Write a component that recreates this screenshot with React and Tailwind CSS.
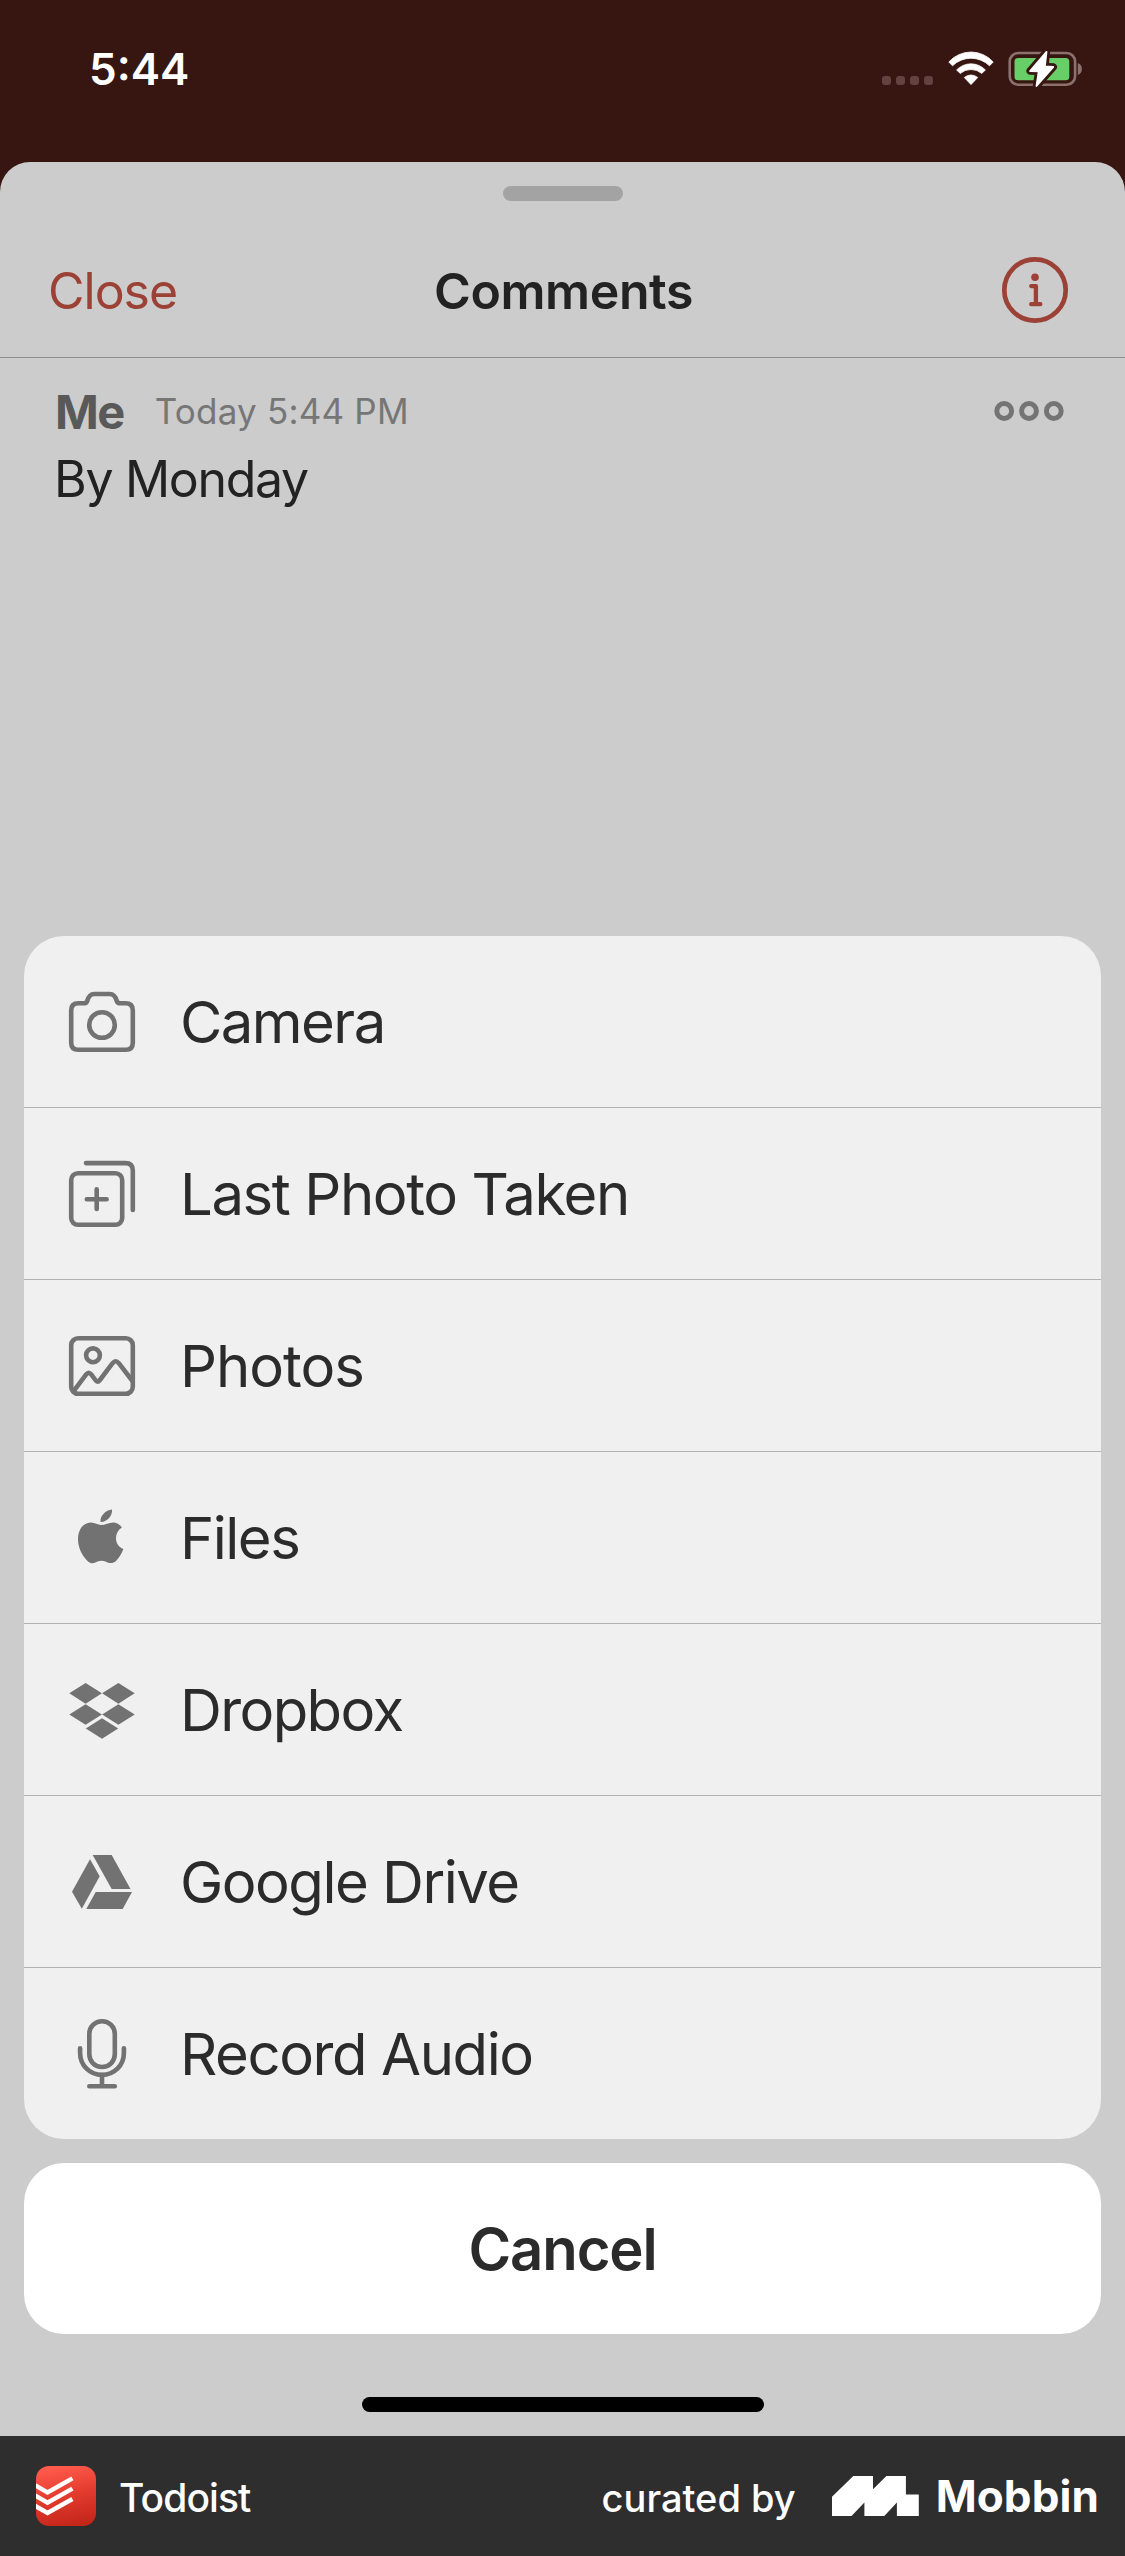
function SignalDots() {
    return (
        <div className="flex gap-[5px] pt-[26px]">
            {[0, 1, 2, 3].map((i) => (
                <span key={i} className="h-[9px] w-[9px] rounded-[3px] bg-[#63433f]" />
            ))}
        </div>
    );
}

function WifiIcon() {
    return (
        <svg width="46" height="36" viewBox="66 0 46 36" fill="#fff" stroke="#fff" strokeWidth="0.8" strokeLinejoin="round">
            <path d="M66.8 12 A29.7 29.7 0 0 1 111.2 12 L107.5 15.8 A26.4 26.4 0 0 0 70.5 15.8 Z" />
            <path d="M74.6 20 A19.9 19.9 0 0 1 103.4 20 L99.7 23.4 A16.6 16.6 0 0 0 78.3 23.4 Z" />
            <path d="M82.3 27.5 A10.2 10.2 0 0 1 95.7 27.5 L89 34.6 Z" />
        </svg>
    );
}

function BatteryIcon() {
    const bolt = 'M165 1.8 L148.6 21 L157.2 21.4 L155 36 L171.8 17 L163.4 16.4 Z';
    return (
        <svg width="75" height="38" viewBox="126.5 0 75 38" fill="none">
            <rect x="128.2" y="3" width="65.4" height="31.8" rx="8.6" stroke="#8d716d" strokeWidth="2.6" />
            <path d="M196.3 13 C199 14 200.4 16.2 200.4 19 C200.4 21.8 199 24 196.3 25 Z" fill="#8d716d" />
            <rect x="133" y="8" width="54.8" height="22.3" rx="3.6" fill="#68ce67" />
            <path d={bolt} fill="#371611" stroke="#371611" strokeWidth="7.4" strokeLinejoin="round" />
            <path d={bolt} fill="#fff" stroke="#fff" strokeWidth="1.8" strokeLinejoin="round" />
        </svg>
    );
}

function InfoIcon() {
    return (
        <svg width="68" height="68" viewBox="-34 -34 68 68" fill="none" stroke="#9b4135" strokeWidth="4.3" strokeLinecap="round" strokeLinejoin="round">
            <circle r="30.7" strokeWidth="4.7" />
            <circle cy="-12.7" r="3.8" fill="#9b4135" stroke="none" />
            <path d="M-3.8 -3.9 H0.9 V14.2 M-3.8 14.2 H5.3" />
        </svg>
    );
}

function MoreIcon() {
    return (
        <svg width="70" height="22" viewBox="0 0 70 22" fill="none" stroke="#747474" strokeWidth="5">
            <circle cx="10.2" cy="11" r="7.4" />
            <circle cx="35" cy="11" r="7.4" />
            <circle cx="59.8" cy="11" r="7.4" />
        </svg>
    );
}

// Menu icons share one 72x71 box
const icons = {
    camera: (
        <>
            <path d="M12.5 17.3 H17.5 C19.6 17.3 20.6 16.8 21.2 15 C22.4 10.8 23.8 8 28.2 8 H43.8 C48.2 8 49.6 10.8 50.8 15 C51.4 16.8 52.4 17.3 54.5 17.3 H59.5 C64.5 17.3 66.8 19.8 66.8 24.3 V56.7 C66.8 61.2 64.3 63.7 59.8 63.7 H12.2 C7.7 63.7 5.2 61.2 5.2 56.7 V24.3 C5.2 19.8 7.5 17.3 12.5 17.3 Z" />
            <circle cx="36" cy="39" r="12.8" />
        </>
    ),
    lastPhoto: (
        <>
            <rect x="5.2" y="15.2" width="51" height="51.6" rx="6.8" />
            <path d="M30.7 31.2 V51 M20.8 41.2 H40.6" />
            <path d="M20 5.1 H59.5 C64.5 5.1 66.8 8 66.8 12.5 V52" />
        </>
    ),
    photos: (
        <>
            <rect x="5.2" y="8.2" width="61.6" height="55.6" rx="7" />
            <circle cx="27" cy="25.3" r="6.9" />
            <path d="M7.8 60.8 L20 44.6 C22 42.3 23.4 42.3 25.4 44.6 L29.4 50 C31 52.2 32.2 52.2 33.9 50 L46.6 33.2 C48.8 30.6 50.6 30.6 52.8 33.2 L66.5 51" />
        </>
    ),
    apple: (
        <g fill="#727272" stroke="none">
            <path d="M35 23 C39 23 43 20.4 47.5 20.4 C50.5 20.4 53.9 22.5 55.9 25.6 C52 28 50 32 50 36.4 C50 41 53 45.3 57.4 47 C55.5 52 52.5 56.6 50 59 C47 61.9 42.8 61.4 40 59.8 C37 58.4 34 58.4 31 59.8 C28 61.5 24.8 61.9 22 59.4 C15.5 53.4 12 45 12 37.3 C12 26.4 18.2 20.5 25 20.5 C29 20.5 32 23 35 23 Z" />
            <path d="M46 7.6 C46.7 13.8 41 20.4 34.5 20 C33.7 14.2 39.8 8 46 7.6 Z" />
        </g>
    ),
    dropbox: (
        <g fill="#727272" stroke="none">
            <path d="M19.6 8.9 L35.9 19.3 L19.6 29.7 L3.3 19.3 Z" />
            <path d="M52.4 8.9 L68.7 19.3 L52.4 29.7 L36.1 19.3 Z" />
            <path d="M19.6 30.3 L35.9 40.5 L19.6 50.7 L3.3 40.5 Z" />
            <path d="M52.4 30.3 L68.7 40.5 L52.4 50.7 L36.1 40.5 Z" />
            <path d="M36 44.2 L52.2 54.5 L36 64.8 L19.8 54.5 Z" />
        </g>
    ),
    drive: (
        <g fill="#727272" stroke="none">
            <path d="M26.7 9 H45.7 L64.5 43 H45.7 Z" />
            <path d="M24 13.3 L33.7 30.2 L15.8 62.8 L6 45.8 Z" />
            <path d="M29.7 46 H66 L56.7 63 H20.3 Z" />
        </g>
    ),
    mic: (
        <>
            <rect x="23.3" y="3.2" width="25.5" height="45.8" rx="12.7" />
            <path d="M14.1 30.3 V35 C14.1 47.6 24 56.9 36 56.9 C48 56.9 57.9 47.6 57.9 35 V30.3" />
            <path d="M36 57 V68 M23.3 68.2 H48.8" />
        </>
    ),
};

const items = [
    { label: 'Camera', icon: 'camera', tracking: 'tracking-[-1.55px]' },
    { label: 'Last Photo Taken', icon: 'lastPhoto', tracking: 'tracking-[-1.4px]' },
    { label: 'Photos', icon: 'photos', tracking: 'tracking-[-1px]' },
    { label: 'Files', icon: 'apple', tracking: 'tracking-[-1.5px]' },
    { label: 'Dropbox', icon: 'dropbox', tracking: 'tracking-[-1.6px]' },
    { label: 'Google Drive', icon: 'drive', tracking: 'tracking-[-1.5px]' },
    { label: 'Record Audio', icon: 'mic', tracking: 'tracking-[-1.4px]' },
];

function MenuItem({ item }) {
    return (
        <li className="flex h-[172px] items-center border-b border-[#b1b1b1] pl-[42px] last:h-[171px] last:border-b-0">
            <svg width="72" height="71" viewBox="0 0 72 71" fill="none" stroke="#727272" strokeWidth="4.6" strokeLinecap="round" strokeLinejoin="round">
                {icons[item.icon]}
            </svg>
            <span className={`ml-[42px] text-[58px] leading-none text-[#2b2b2b] ${item.tracking}`}>{item.label}</span>
        </li>
    );
}

function TodoistLogo() {
    return (
        <svg width="60" height="60" viewBox="0 0 60 60">
            <defs>
                <linearGradient id="todoist" x1="0.4" y1="0" x2="0.6" y2="1">
                    <stop offset="0" stopColor="#ff5a4b" />
                    <stop offset="0.5" stopColor="#e23b2e" />
                    <stop offset="1" stopColor="#c4261a" />
                </linearGradient>
                <clipPath id="tile">
                    <rect width="60" height="60" rx="13" />
                </clipPath>
            </defs>
            <g clipPath="url(#tile)">
                <rect width="60" height="60" fill="url(#todoist)" />
                <g fill="none" stroke="#fff" strokeWidth="4.4" strokeLinejoin="miter">
                    <path d="M-2 18.6 L11.5 26.4 L36.4 12.4" />
                    <path d="M-2 28.9 L11.5 36.7 L36.4 22.7" />
                    <path d="M-2 39.2 L11.5 47 L36.4 33" />
                </g>
            </g>
        </svg>
    );
}

function MobbinLogo() {
    return (
        <svg width="87" height="40" viewBox="0 0 87 40" fill="#fff">
            <path d="M0 20.8 L21.3 0 H41 V13.3 L54.4 0 H73.9 V18.4 H86.8 V40 H64.9 V26.6 L52.3 40 H32.4 V26.6 L19.5 40 H0 Z" />
        </svg>
    );
}

export default function App() {
    return (
        <div className="flex h-[2556px] w-[1125px] flex-col bg-[#371611] font-['Inter',sans-serif]">
            {/* Status bar */}
            <div className="flex h-[162px] items-start justify-between pt-[50px] pr-[42px] pl-[89px]">
                <span className="text-[44px] leading-[38px] font-semibold text-white">5:44</span>
                <div className="flex items-start">
                    <SignalDots />
                    <div className="ml-[15px]"><WifiIcon /></div>
                    <div className="ml-[14px]"><BatteryIcon /></div>
                </div>
            </div>

            {/* Comments sheet */}
            <div className="flex flex-1 flex-col rounded-t-[30px] bg-[#cccccc]">
                <div className="mx-auto mt-6 h-[15px] w-[120px] rounded-full bg-[#a3a3a3]" />
                <header className="flex h-[157px] items-center border-b border-[#8e8e8e] pt-[22px] pr-14 pl-12">
                    <span className="w-[340px] pt-0.5 text-[50px] leading-none tracking-[-1px] text-[#9b4135]">Close</span>
                    <h1 className="flex-1 pt-0.5 text-center text-[50px] leading-none font-semibold tracking-[-0.4px] text-[#222222]">Comments</h1>
                    <div className="flex w-[330px] justify-end"><InfoIcon /></div>
                </header>

                <div className="h-[578px] pt-[29px] pr-[61px] pl-[55px]">
                    <div className="flex h-[48px] items-center">
                        <span className="text-[47px] leading-none font-bold tracking-[-1.5px] text-[#595959]">Me</span>
                        <span className="ml-[31px] text-[35px] leading-none tracking-[0.2px] text-[#767676]">Today 5:44 PM</span>
                        <div className="ml-auto"><MoreIcon /></div>
                    </div>
                    <p className="-ml-px mt-[19px] text-[50px] leading-[50px] tracking-[-1.3px] text-[#222222]">By Monday</p>
                </div>

                {/* Attachment menu */}
                <ul className="mx-6 rounded-[40px] bg-[#f0f0f0]">
                    {items.map((item) => (
                        <MenuItem key={item.label} item={item} />
                    ))}
                </ul>
                <button className="mx-6 mt-6 h-[171px] rounded-[40px] bg-white text-[58px] leading-none font-semibold tracking-[-1.1px] text-[#2b2b2b]">Cancel</button>

                <div className="mx-auto mt-[63px] h-[15px] w-[402px] rounded-full bg-black" />
            </div>

            {/* Footer */}
            <footer className="flex h-[120px] items-center bg-[#2e2e2e] pr-[26px] pl-9 text-white">
                <TodoistLogo />
                <span className="ml-[23px] pt-[3px] text-[39px] leading-none font-medium tracking-[-0.9px]">Todoist</span>
                <div className="ml-auto flex items-center">
                    <span className="pt-[3px] text-[38px] leading-none font-medium">curated by</span>
                    <div className="ml-[36px]"><MobbinLogo /></div>
                    <span className="ml-[17px] text-[44px] leading-none font-bold tracking-[0.1px]">Mobbin</span>
                </div>
            </footer>
        </div>
    );
}
